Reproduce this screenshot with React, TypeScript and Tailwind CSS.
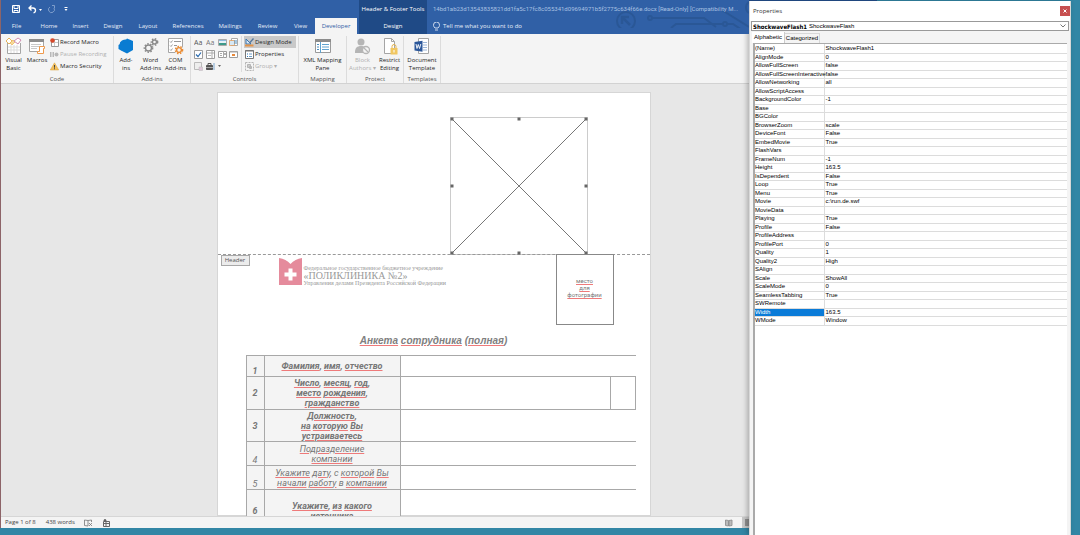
import type { ReactNode } from "react";
import clsx from "clsx";

const tabs = [
  { label: "File", width: "w-[31px]" },
  { label: "Home", width: "w-[34px]" },
  { label: "Insert", width: "w-[29px]" },
  { label: "Design", width: "w-[36px]" },
  { label: "Layout", width: "w-[34px]" },
  { label: "References", width: "w-[46px]" },
  { label: "Mailings", width: "w-[38px]" },
  { label: "Review", width: "w-[37px]" },
  { label: "View", width: "w-[29px]" },
];

const properties: [string, string][] = [
  ["(Name)", "ShockwaveFlash1"],
  ["AlignMode", "0"],
  ["AllowFullScreen", "false"],
  ["AllowFullScreenInteractive", "false"],
  ["AllowNetworking", "all"],
  ["AllowScriptAccess", ""],
  ["BackgroundColor", "-1"],
  ["Base", ""],
  ["BGColor", ""],
  ["BrowserZoom", "scale"],
  ["DeviceFont", "False"],
  ["EmbedMovie", "True"],
  ["FlashVars", ""],
  ["FrameNum", "-1"],
  ["Height", "163.5"],
  ["IsDependent", "False"],
  ["Loop", "True"],
  ["Menu", "True"],
  ["Movie", "c:\\run.de.swf"],
  ["MovieData", ""],
  ["Playing", "True"],
  ["Profile", "False"],
  ["ProfileAddress", ""],
  ["ProfilePort", "0"],
  ["Quality", "1"],
  ["Quality2", "High"],
  ["SAlign", ""],
  ["Scale", "ShowAll"],
  ["ScaleMode", "0"],
  ["SeamlessTabbing", "True"],
  ["SWRemote", ""],
  ["Width", "163.5"],
  ["WMode", "Window"],
];

/* ---------- icons ---------- */

function VisualBasicIcon() {
  return (
    <svg width="18" height="18" viewBox="0 0 18 18" fill="none">
      <path d="M2.500 6v10.500h13V6" fill="#fff" stroke="#a5a5a5" />
      <path d="M3 10h12M3 13h12M6 8v8M9 8v8M12 8v8" stroke="#ddd" />
      <path d="M1 4l3-3 3 3-3 3z" fill="#fff" stroke="#e8b45a" />
      <path d="M5 6l3-3 2 2-3 3z" fill="#f7d999" stroke="#e8b45a" strokeWidth=".7" />
      <path d="M9 4l4-3 3 2-3 4z" fill="#fff" stroke="#cf8bb0" />
    </svg>
  );
}

function MacrosIcon() {
  return (
    <svg width="18" height="18" viewBox="0 0 18 18" fill="none">
      <path d="M1.500 2.500h14v12h-14z" fill="#fff" stroke="#a5a5a5" />
      <path d="M1 2h15v3H1z" fill="#8c8c8c" />
      <path d="M3 7.500h10M3 9.500h10M3 11.500h6" stroke="#c9c9c9" />
      <path d="M11.500 9.500h5v2h-1v5h-6v-2h2z" fill="#fff" stroke="#ee9a4d" />
    </svg>
  );
}

function AddInsIcon() {
  return (
    <svg width="16" height="16" viewBox="0 0 16 16" fill="#0a7cd2">
      <path d="M9 .5l6 2.500v9L9 15.500l-6-3V7z" />
      <path d="M3 5.500l2.500 1.500v4L3 12.500.5 11V7z" />
      <path d="M3 7c0-3 3-4 5-4" stroke="#0a7cd2" strokeWidth="3" />
    </svg>
  );
}

function Gear({ x, y, r, color }: { x: number; y: number; r: number; color: string }) {
  return (
    <g fill="none" stroke={color}>
      <circle cx={x} cy={y} r={r} strokeWidth="1.400" />
      <circle cx={x} cy={y} r={r + 1.2} strokeWidth="1.400" strokeDasharray="1.500 1.500" />
    </g>
  );
}

function GearsIcon() {
  return (
    <svg width="16" height="16" viewBox="0 0 16 16">
      <Gear x={5.5} y={10} r={3} color="#8a8a8a" />
      <Gear x={11.5} y={4} r={2} color="#8a8a8a" />
    </svg>
  );
}

function ComAddInsIcon() {
  return (
    <svg width="17" height="17" viewBox="0 0 17 17" fill="none">
      <path d="M1.500.5h14v14h-14z" fill="#fff" stroke="#a5a5a5" />
      <path d="M3 3.500l1 1 1.500-2M3 7.500l1 1 1.500-2M3 11.500l1 1 1.500-2" stroke="#777" strokeWidth=".7" />
      <path d="M7 3.500h7M7 7.500h3" stroke="#999" />
      <circle cx="12" cy="12" r="4.500" fill="#f4f4f4" />
      <Gear x={12} y={12} r={2.4} color="#ea8b33" />
    </svg>
  );
}

function XmlPaneIcon() {
  return (
    <svg width="16" height="16" viewBox="0 0 16 16" fill="none">
      <path d="M.5 1.500h15v13H.5z" fill="#fff" stroke="#9a9a9a" />
      <path d="M0 1h16v3H0z" fill="#8c8c8c" />
      <path d="M5.500 4v11M7 6.500h7M7 9h7M7 11.500h7" stroke="#5fa3d0" />
      <path d="M2 6.500h2M2 9h2M2 11.500h2" stroke="#4a8ec0" />
    </svg>
  );
}

function BlockAuthorsIcon() {
  return (
    <svg width="17" height="17" viewBox="0 0 17 17">
      <circle cx="7" cy="4" r="3.500" fill="#b5b5b5" />
      <path d="M1 14c0-4 2-6 6-6 2 0 3 .5 4 1v6H1z" fill="#b5b5b5" />
      <circle cx="12" cy="12" r="3.500" fill="#f4f4f4" stroke="#b5b5b5" strokeWidth="1.300" />
      <path d="M9.500 9.500l5 5" stroke="#b5b5b5" strokeWidth="1.300" />
    </svg>
  );
}

function RestrictIcon() {
  return (
    <svg width="16" height="17" viewBox="0 0 16 17" fill="none">
      <path d="M2.500.5h7l3 3v12h-10z" fill="#fff" stroke="#a5a5a5" />
      <path d="M9.500.5v3h3" stroke="#a5a5a5" />
      <path d="M10 10V8.500a2 2 0 014 0V10" stroke="#e3b34f" />
      <path d="M8.500 10h7v6.500h-7z" fill="#f1c761" />
      <path d="M12 12v2.500" stroke="#fff" />
    </svg>
  );
}

function TemplateIcon() {
  return (
    <svg width="16" height="17" viewBox="0 0 16 17" fill="none">
      <path d="M4.500.5h10v15h-10z" fill="#fff" stroke="#a5a5a5" />
      <path d="M9 4.500h4M9 7h4M9 9.500h4M9 12h4" stroke="#9cb6d8" />
      <path d="M.5 4l8-1.200v11L.5 12.500z" fill="#2b579a" />
      <path d="M2 6l1 4.500 1.300-4 1.200 4L6.800 6" stroke="#fff" strokeWidth=".9" />
    </svg>
  );
}

function RecordIcon() {
  return (
    <svg width="9" height="9" viewBox="0 0 9 9" fill="none">
      <path d="M1.500 1.500h7v7h-7z" fill="#fff" stroke="#999" />
      <path d="M2 4.500h6M4.500 2v6" stroke="#ccc" />
      <circle cx="2.500" cy="2.500" r="2.300" fill="#d8492b" />
    </svg>
  );
}

function PauseIcon() {
  return (
    <svg width="9" height="9" viewBox="0 0 9 9" fill="#b8b8b8">
      <path d="M0 2h1.500v5H0zM2.500 2H4v5H2.500z" />
      <circle cx="6.500" cy="4.500" r="2" />
    </svg>
  );
}

function WarningIcon() {
  return (
    <svg width="9" height="9" viewBox="0 0 9 9">
      <path d="M4.500.8L8.700 8H.3z" fill="#f3c05b" stroke="#dca23a" strokeWidth=".5" />
      <path d="M4.500 3v2.700M4.500 6.300v1" stroke="#444" />
    </svg>
  );
}

function DesignModeIcon() {
  return (
    <svg width="9" height="9" viewBox="0 0 9 9" fill="none">
      <path d="M1 1v5h5z" fill="#d9e7f4" stroke="#3b76b0" />
      <path d="M8.500.5l-4 4.500" stroke="#55779b" strokeWidth="1.300" />
      <path d="M0 7.500h8.500" stroke="#e3944a" strokeWidth="2" />
    </svg>
  );
}

function PropertiesIcon() {
  return (
    <svg width="9" height="9" viewBox="0 0 9 9" fill="none">
      <path d="M.5.5h8v8h-8z" fill="#fff" stroke="#777" />
      <path d="M0 1h9" stroke="#777" />
      <path d="M2 4h1M2 6.500h1" stroke="#2f7dc0" />
      <path d="M4 4h3M4 6.500h3" stroke="#6c9dc9" />
    </svg>
  );
}

function GroupIcon() {
  return (
    <svg width="9" height="9" viewBox="0 0 9 9" fill="none" stroke="#b5b5b5">
      <path d="M.5.5h8v8h-8z" strokeDasharray="2 1" />
      <path d="M2.500 2.500h3v3h-3zM4.500 4.500h2v2h-2z" fill="#ccc" />
    </svg>
  );
}

/* one small form-control glyph per cell */
const controlIcons: { name: string; art: ReactNode }[] = [
  { name: "Rich text", art: <text x="0" y="7" fontSize="7" fill="#555">Aa</text> },
  { name: "Plain text", art: <text x="0" y="7" fontSize="7" fill="#777">Aa</text> },
  {
    name: "Picture",
    art: <><path d="M.5 1.500h8v6h-8z" fill="#e6f1f8" stroke="#aaa" /><path d="M1 5h7v2H1z" fill="#3d9a8b" /><path d="M1 2h7v1H1z" fill="#8dbbe0" /></>,
  },
  {
    name: "Building block",
    art: <><path d="M2.500.5h6v7h-6z" fill="#fff" stroke="#aaa" /><path d="M.5 2.500h5v5h-5z" fill="#d7e8f5" stroke="#e3944a" strokeWidth=".7" /><path d="M5 3h3M5 5h3" stroke="#4d8fc4" /></>,
  },
  {
    name: "Check box",
    art: <><path d="M.5.5h8v8h-8z" fill="#fff" stroke="#9c9c9c" /><path d="M2 4.500l2 2 3-4" stroke="#2b6cb0" strokeWidth="1.200" /></>,
  },
  {
    name: "Combo box",
    art: <><path d="M.5.5h8v8h-8z" fill="#fff" stroke="#9c9c9c" /><path d="M1 3h7M6 1v7" stroke="#aaa" /><path d="M2 5.500h3" stroke="#bbb" /></>,
  },
  {
    name: "Drop-down list",
    art: <><path d="M.5 1.500h8v6h-8z" fill="#fff" stroke="#9c9c9c" /><path d="M5.500 1v7M2 3.500h2M2 5.500h2" stroke="#aaa" /><path d="M6 4h2" stroke="#666" /></>,
  },
  {
    name: "Date picker",
    art: <><path d="M.5 1.500h8v6h-8z" fill="#fff" stroke="#9c9c9c" /><path d="M1 2h7" stroke="#aaa" /><path d="M3 4h3v2H3z" fill="#e8893a" /></>,
  },
  {
    name: "Repeating section",
    art: <><path d="M.5.5h7v7h-7z" fill="#eee" stroke="#bbb" /><path d="M5 5h3.500v3.500H5z" fill="#e1c9dc" stroke="#bbb" strokeWidth=".5" /></>,
  },
  {
    name: "Legacy tools",
    art: <><path d="M.5 3.500h6v4h-6z" fill="#555" stroke="#555" /><path d="M2 3V1.500h3V3" stroke="#555" /><path d="M8 1v7" stroke="#7aa7d0" /><path d="M0 5.500h7" stroke="#ddd" strokeWidth=".6" /></>,
  },
];

/* ---------- ribbon ---------- */

function RibbonGroup({ label, className, children }: { label: string; className: string; children: ReactNode }) {
  return (
    <section className={clsx("flex shrink-0 flex-col border-r border-[#dcdcdc]", className)}>
      <div className="flex flex-1 items-start">{children}</div>
      <h2 className="text-center leading-[8px] text-[#555]">{label}</h2>
    </section>
  );
}

function BigButton({ icon, lines, className, disabled }: { icon: ReactNode; lines: string[]; className: string; disabled?: boolean }) {
  return (
    <button
      type="button"
      disabled={disabled}
      className={clsx("flex shrink-0 flex-col items-center whitespace-nowrap leading-[8px]", disabled && "text-[#b0b0b0]", className)}
    >
      <span className="flex h-5 items-center">{icon}</span>
      {lines.map((line) => (
        <span key={line}>{line}</span>
      ))}
    </button>
  );
}

function SmallButton({ icon, label, disabled, active }: { icon: ReactNode; label: string; disabled?: boolean; active?: boolean }) {
  return (
    <button
      type="button"
      disabled={disabled}
      className={clsx(
        "flex h-3 items-center gap-px whitespace-nowrap pl-px pr-1",
        disabled && "text-[#b0b0b0]",
        active && "bg-[#c9c9c9]"
      )}
    >
      {icon}
      <span>{label}</span>
    </button>
  );
}

function Ribbon() {
  return (
    <div className="flex h-[50px] shrink-0 border-b border-[#d2d2d2] bg-[#f4f4f4] pt-[2px] text-[#262626]">
      <RibbonGroup label="Code" className="w-[113px]">
        <BigButton icon={<VisualBasicIcon />} lines={["Visual", "Basic"]} className="w-[25px]" />
        <BigButton icon={<MacrosIcon />} lines={["Macros"]} className="w-[22px]" />
        <div className="flex flex-col pl-[1px]">
          <SmallButton icon={<RecordIcon />} label="Record Macro" />
          <SmallButton icon={<PauseIcon />} label="Pause Recording" disabled />
          <SmallButton icon={<WarningIcon />} label="Macro Security" />
        </div>
      </RibbonGroup>
      <RibbonGroup label="Add-ins" className="w-[77px]">
        <BigButton icon={<AddInsIcon />} lines={["Add-", "ins"]} className="w-[24px]" />
        <BigButton icon={<GearsIcon />} lines={["Word", "Add-ins"]} className="w-[25px]" />
        <BigButton icon={<ComAddInsIcon />} lines={["COM", "Add-ins"]} className="w-[25px]" />
      </RibbonGroup>
      <RibbonGroup label="Controls" className="w-[108px]">
        <div className="grid w-[50px] grid-cols-4 pl-[3px]">
          {controlIcons.map((icon) => (
            <button key={icon.name} type="button" aria-label={icon.name} className="flex h-3 items-center">
              <svg width="9" height="9" viewBox="0 0 9 9" fill="none">
                {icon.art}
              </svg>
            </button>
          ))}
          <span className="flex h-3 items-center">
            <svg width="3" height="2" viewBox="0 0 3 2" fill="#666">
              <path d="M0 0h3L1.500 2z" />
            </svg>
          </span>
        </div>
        <div className="flex flex-col border-l border-[#dcdcdc] pl-[2px]">
          <SmallButton icon={<DesignModeIcon />} label="Design Mode" active />
          <SmallButton icon={<PropertiesIcon />} label="Properties" />
          <SmallButton icon={<GroupIcon />} label="Group ▾" disabled />
        </div>
      </RibbonGroup>
      <RibbonGroup label="Mapping" className="w-[48px]">
        <BigButton icon={<XmlPaneIcon />} lines={["XML Mapping", "Pane"]} className="w-[47px]" />
      </RibbonGroup>
      <RibbonGroup label="Protect" className="w-[57px]">
        <BigButton icon={<BlockAuthorsIcon />} lines={["Block", "Authors ▾"]} className="w-[31px]" disabled />
        <BigButton icon={<RestrictIcon />} lines={["Restrict", "Editing"]} className="w-[23px]" />
      </RibbonGroup>
      <RibbonGroup label="Templates" className="w-[37px]">
        <BigButton icon={<TemplateIcon />} lines={["Document", "Template"]} className="w-[36px]" />
      </RibbonGroup>
    </div>
  );
}

function TitleBar() {
  return (
    <header className="relative flex h-[34px] shrink-0 overflow-hidden bg-[#3060a6] text-[#e6edf8]">
      <svg className="absolute right-0 top-0" width="136" height="28" viewBox="0 0 136 28" fill="none" stroke="#2a5796" strokeWidth="2">
        <circle cx="13" cy="21" r="9" />
        <path d="M17 25l-7-7M9 24v-7h7" strokeWidth="2.500" />
        <circle cx="37" cy="18" r="2" />
        <path d="M39 18h52l12 9M58 28l5-4h46M114 24h6l9 6" />
        <circle cx="112" cy="24" r="2" />
        <path d="M104 7l32 20M136 2c-4 3-4 8 0 11" />
      </svg>
      <div className="flex shrink-0 flex-col">
        <div className="flex h-[18px] items-center gap-2 pl-[11px]">
          <button type="button" aria-label="Save">
            <svg width="8" height="8" viewBox="0 0 8 8" fill="none" stroke="#fff">
              <path d="M.5.5h7v7h-7zM2 .5v3h4v-3M2 7.500v-2h4v2" />
            </svg>
          </button>
          <button type="button" aria-label="Undo">
            <svg width="15" height="9" viewBox="0 0 15 9" fill="none" stroke="#fff">
              <path d="M3.500.5L1 3l2.500 2.500M1 3h4c3 0 3.500 4 .5 5" strokeWidth="1.300" />
              <path d="M11 4h3l-1.500 2z" fill="#fff" stroke="none" />
            </svg>
          </button>
          <button type="button" aria-label="Repeat" className="-ml-1">
            <svg width="9" height="9" viewBox="0 0 9 9" fill="none" stroke="#7d9dcb">
              <path d="M3 2a3 3 0 104 1M5 .5h2.500V3" />
            </svg>
          </button>
          <button type="button" aria-label="Customize toolbar">
            <svg width="4" height="5" viewBox="0 0 4 5" fill="#fff">
              <path d="M.5 0h3v1h-3zM.5 2h3L2 4z" />
            </svg>
          </button>
        </div>
        <nav className="flex h-4">
          {tabs.map((tab) => (
            <button key={tab.label} type="button" className={tab.width}>
              {tab.label}
            </button>
          ))}
          <button type="button" className="w-[42px] bg-[#f4f4f4] text-[#3060a6]">
            Developer
          </button>
        </nav>
      </div>
      <div className="ml-[2px] flex w-[68px] shrink-0 flex-col bg-[#1f4a86] text-center text-white">
        <span className="h-[18px] leading-[18px]">Header &amp; Footer Tools</span>
        <button type="button" className="h-4">
          Design
        </button>
      </div>
      <div className="relative flex min-w-0 flex-1 flex-col pl-[6px] pr-2">
        <h1 className="h-[18px] truncate leading-[18px] text-[#a9c0e2] [font-family:Roboto,sans-serif]">
          14bd1ab23d13543835821dd1fa5c17fc8c055341d09694971b5f2775c634f66e.docx [Read-Only] [Compatibility M...
        </h1>
        <button type="button" className="flex h-4 items-center gap-[3px]">
          <svg width="7" height="9" viewBox="0 0 7 9" fill="none" stroke="#dfe8f5">
            <path d="M2 6C.5 4.500.5 3.500.5 3a3 3 0 016 0c0 .5 0 1.500-1.500 3zM2 8h3" strokeWidth=".9" />
          </svg>
          Tell me what you want to do
        </button>
      </div>
    </header>
  );
}

/* ---------- document ---------- */

/* spell-checked run with the red mark under it */
function Sp({ children }: { children: ReactNode }) {
  return <span className="underline decoration-[#ee7a7a] decoration-1 underline-offset-1">{children}</span>;
}

function FlashObject() {
  const handles = [
    [2, 2], [69, 2], [136, 2],
    [2, 69], [136, 69],
    [2, 136], [69, 136], [136, 136],
  ];
  return (
    <svg width="138" height="138" viewBox="0 0 138 138" fill="none">
      <path d="M.5.5h137v137H.5z" stroke="#999" strokeDasharray="1 1" />
      <path d="M2 2l134 134M136 2L2 136" stroke="#777" />
      {handles.map(([x, y]) => (
        <rect key={`${x}-${y}`} x={x - 1.5} y={y - 1.5} width="3" height="3" fill="#666" />
      ))}
    </svg>
  );
}

const rows: { n: number; height: string; bold: boolean; align: string; text: ReactNode }[] = [
  { n: 1, height: "h-[21px]", bold: true, align: "align-bottom", text: <><Sp>Фамилия</Sp>, <Sp>имя</Sp>, <Sp>отчество</Sp></> },
  { n: 2, height: "h-[33px]", bold: true, align: "align-middle", text: <><Sp>Число</Sp>, <Sp>месяц</Sp>, <Sp>год</Sp>,<br /><Sp>место</Sp> <Sp>рождения</Sp>,<br /><Sp>гражданство</Sp></> },
  { n: 3, height: "h-[32px]", bold: true, align: "align-middle", text: <><Sp>Должность</Sp>,<br /><Sp>на</Sp> <Sp>которую</Sp> <Sp>Вы</Sp><br /><Sp>устраиваетесь</Sp></> },
  { n: 4, height: "h-[24px]", bold: false, align: "align-bottom", text: <><Sp>Подразделение</Sp><br /><Sp>компании</Sp></> },
  { n: 5, height: "h-[24px]", bold: false, align: "align-bottom", text: <><Sp>Укажите</Sp> <Sp>дату</Sp>, с <Sp>которой</Sp> <Sp>Вы</Sp><br /><Sp>начали</Sp> <Sp>работу</Sp> в <Sp>компании</Sp></> },
  { n: 6, height: "h-[42px]", bold: true, align: "align-middle", text: <><Sp>Укажите</Sp>, <Sp>из</Sp> <Sp>какого</Sp><br /><Sp>источника</Sp></> },
];

function FormTable() {
  return (
    <table className="ml-7 mt-2 w-[390px] table-fixed border-collapse text-[9px] leading-[10px] text-[#777] [font-family:Roboto,'Noto_Sans',sans-serif]">
      <colgroup>
        <col className="w-[18px]" />
        <col className="w-[136px]" />
        <col />
      </colgroup>
      <tbody>
        {rows.map((row) => (
          <tr key={row.n} className={clsx(row.height, "border-y border-[#a8a8a8] italic", row.bold && "font-bold")}>
            <td className={clsx("border-x border-[#a8a8a8] bg-[#f4f4f4] p-0 text-center", row.align)}>{row.n}</td>
            <td className="whitespace-nowrap border-x border-[#a8a8a8] bg-[#f4f4f4] p-0 text-center align-middle">{row.text}</td>
            <td className="p-0">
              {row.n === 2 && <div className="-my-px ml-auto h-[34px] w-[26px] border border-[#a8a8a8]" />}
            </td>
          </tr>
        ))}
      </tbody>
    </table>
  );
}

function DocumentPage() {
  return (
    <main className="flex min-h-0 flex-1 justify-center overflow-hidden bg-[#e7e7e7] pl-[117px] pt-2">
      <article className="w-[434px] shrink-0 border border-[#d6d6d6] bg-white">
        <div className="flex h-[162px] justify-end border-b border-dashed border-[#999] pr-[62px] pt-6">
          <FlashObject />
        </div>
        <div className="flex h-[70px] items-start pl-[3px]">
          <span className="h-[11px] w-[29px] border border-[#a8a8a8] bg-[#ececec] text-center leading-[9px] text-[#555]">Header</span>
          <svg className="ml-[29px] mt-[3px]" width="23" height="27" viewBox="0 0 23 27">
            <path d="M0 0q7 1 11.500 6Q16 1 23 0v27H0z" fill="#e58b9c" />
            <path d="M9.500 10.500h4v4h4v4h-4v4h-4v-4h-4v-4h4z" fill="#fff" />
          </svg>
          <div className="ml-[2px] mt-[10px] whitespace-nowrap text-[#999] [font-family:'Liberation_Serif',serif]">
            <p className="text-[6px] leading-[6px]">Федеральное государственное бюджетное учреждение</p>
            <p className="text-[10px] leading-[9px]">«ПОЛИКЛИНИКА №2»</p>
            <p className="text-[6px] leading-[6px]">Управления делами Президента Российской Федерации</p>
          </div>
          <div className="-mt-px ml-auto mr-9 flex h-[71px] w-[58px] items-center justify-center border border-[#888] bg-white pb-1 text-center text-[6px] leading-[7px] text-[#777] [font-family:Roboto,sans-serif]">
            <p><Sp>место</Sp><br /><Sp>для</Sp><br /><Sp>фотографии</Sp></p>
          </div>
        </div>
        <h2 className="mt-[9px] text-center text-[10px] font-bold italic leading-[13px] text-[#808080] [font-family:'Liberation_Sans',sans-serif]">
          <Sp>Анкета</Sp> <Sp>сотрудника</Sp> (<Sp>полная</Sp>)
        </h2>
        <FormTable />
      </article>
    </main>
  );
}

function StatusBar() {
  return (
    <footer className="flex h-3 shrink-0 items-center border-t border-[#d6d6d6] bg-[#f4f4f4] pl-1 text-[#444]">
      <span>Page 1 of 8</span>
      <span className="ml-[10px]">438 words</span>
      <svg className="ml-[9px]" width="9" height="8" viewBox="0 0 9 8" fill="none" stroke="#777" strokeWidth=".8">
        <path d="M4 7V1.500L.5 1v5.500zM4 1.500L7.500 1v2M5 4l3 3M8 4L5 7" />
      </svg>
      <svg className="ml-[10px]" width="8" height="8" viewBox="0 0 8 8" fill="none" stroke="#666">
        <path d="M.5 2.500h6v5h-6zM0 4.500h7M3 2v5" />
        <circle cx="2" cy="1.500" r="1" fill="#555" />
      </svg>
      <svg className="ml-auto mr-[9px]" width="8" height="8" viewBox="0 0 8 8" fill="#bbb" stroke="#888" strokeWidth=".8">
        <path d="M.5 1l3 .5v5.500l-3-.5zM7 1l-3 .5v5.500l3-.5z" />
      </svg>
      <span className="flex h-full w-[7px] items-center justify-end bg-[#c8c8c8]">
        <span className="h-[7px] w-[4px] bg-[#8f8f8f]" />
      </span>
    </footer>
  );
}

/* ---------- properties window ---------- */

function PropertiesWindow() {
  return (
    <aside className="flex w-[322px] shrink-0 flex-col text-[6px] text-black [font-family:'Liberation_Sans',sans-serif]">
      <div className="flex h-px shrink-0 bg-[#3286a5]">
        <div className="w-[128px] bg-[#234f8d]" />
      </div>
      <div className="flex min-h-0 flex-1 flex-col border-x border-[#d8d8d8] bg-[#f4f4f4] shadow-[-2px_0_5px_rgba(0,0,0,0.25)]">
        <div className="flex h-5 shrink-0 items-center justify-between bg-white pl-[3px]">
          <h2 className="text-[#333] [font-family:'Open_Sans',sans-serif]">Properties</h2>
          <button type="button" aria-label="Close" className="flex h-[10px] w-[10px] items-center justify-center bg-[#c75050]">
            <svg width="4" height="4" viewBox="0 0 4 4" stroke="#fff">
              <path d="M.5.5l3 3M3.500.5l-3 3" />
            </svg>
          </button>
        </div>
        <div className="mx-px flex h-[10px] shrink-0 items-center border border-[#999] bg-white pl-[1px]">
          <label htmlFor="object" className="font-bold [font-family:'DejaVu_Sans_Condensed','DejaVu_Sans',sans-serif]">
            ShockwaveFlash1
          </label>
          <select id="object" className="ml-[2px] h-2 flex-1 appearance-none leading-[8px] outline-none">
            <option>ShockwaveFlash</option>
          </select>
          <svg className="mr-[2px]" width="6" height="4" viewBox="0 0 6 4" fill="none" stroke="#777">
            <path d="M.5.5L3 3 5.500.5" />
          </svg>
        </div>
        <div className="flex h-3 shrink-0 items-end pl-[2px]">
          <button type="button" className="h-[11px] w-[33px] border-r border-[#ccc] bg-white">
            Alphabetic
          </button>
          <button type="button" className="h-[10px] w-[35px] border-r border-t border-[#d8d8d8]">
            Categorized
          </button>
        </div>
        <div className="mx-[3px] min-h-0 flex-1 border-l-2 border-t border-[#aaa] bg-white">
          <table className="w-full table-fixed border-collapse leading-[7px]">
            <colgroup>
              <col className="w-[69px]" />
              <col />
            </colgroup>
            <tbody>
              {properties.map(([name, value]) => (
                <tr key={name} className="border-b border-[#dcdcdc] odd:h-[9px] even:h-[8px]">
                  <td
                    className={clsx(
                      "whitespace-nowrap border-r border-[#dcdcdc] p-0",
                      name === "Width" && "bg-[#0a7bd8] text-white"
                    )}
                  >
                    {name}
                  </td>
                  <td className="p-0 pl-px">{value}</td>
                </tr>
              ))}
            </tbody>
          </table>
        </div>
      </div>
    </aside>
  );
}

export default function App() {
  return (
    <div className="flex h-screen overflow-hidden bg-[#3286a5] text-[6px] [font-family:'Open_Sans','Noto_Sans',sans-serif]">
      <div className="mb-[7px] flex min-w-0 flex-1 flex-col border-l border-[#8d6468]">
        <TitleBar />
        <Ribbon />
        <DocumentPage />
        <StatusBar />
      </div>
      <PropertiesWindow />
      <div className="w-[9px] shrink-0" />
    </div>
  );
}
